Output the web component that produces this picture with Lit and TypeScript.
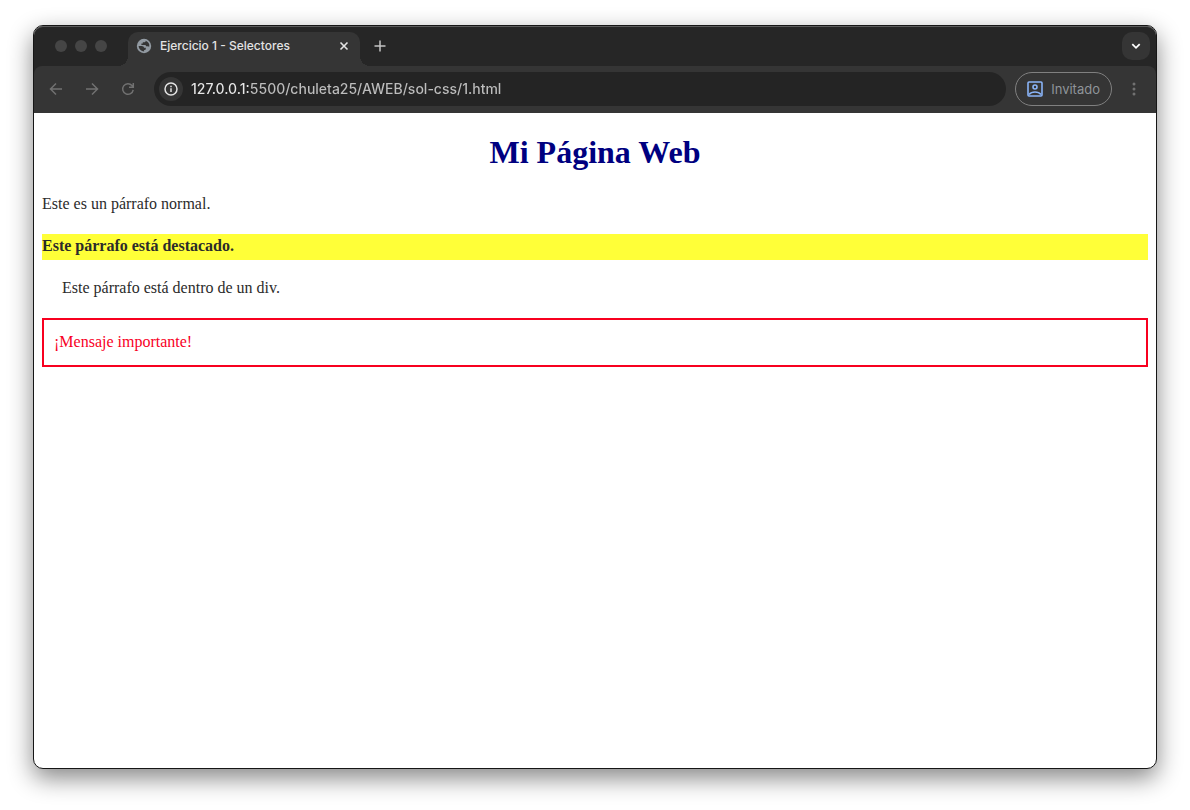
import { LitElement, html, css } from "lit";
import { customElement, property } from "lit/decorators.js";

@customElement("browser-tab")
class BrowserTab extends LitElement {
  @property() label = "";

  static styles = css`
    :host {
      display: block;
      width: 232px;
    }
    .tab {
      position: relative;
      display: flex;
      align-items: center;
      height: 34px;
      box-sizing: border-box;
      padding: 0 8px 6px;
      border-radius: 10px 10px 0 0;
      background: #353535;
      color: #e3e3e3;
    }
    .tab::before,
    .tab::after {
      content: "";
      position: absolute;
      bottom: 0;
      width: 10px;
      height: 10px;
    }
    .tab::before {
      right: 100%;
      background: radial-gradient(circle at 0 0, transparent 10px, #353535 10px);
    }
    .tab::after {
      left: 100%;
      background: radial-gradient(circle at 100% 0, transparent 10px, #353535 10px);
    }
    .title {
      flex: 1;
      margin-left: 8px;
      font-size: 12px;
      line-height: 16px;
      font-weight: 500;
      white-space: nowrap;
      overflow: hidden;
    }
    .close {
      display: grid;
      place-items: center;
      width: 16px;
      height: 16px;
      padding: 0;
      border: 0;
      background: none;
      color: inherit;
    }
    svg {
      display: block;
    }
  `;

  render() {
    return html`
      <div class="tab">
        <svg width="16" height="16" viewBox="0 0 16 16" aria-hidden="true">
          <circle cx="8" cy="8" r="7.200" fill="#929aa2" />
          <path
            d="M2.600 8H5.600C7.200 8 8 8.700 8 9.800H9.800V11C9.800 11.700 9.200 12 8.100 12V13.400A5.500 5.500 0 0 1 2.600 8Z"
            fill="#353535"
          />
          <path
            d="M9.600 2.700V3.200C9.600 4 9 4.300 8 4.300H6.800V5.500H5.400V7H8.700C9.600 7 10 7.500 10 8.200H11.500C12.300 8.200 12.600 8.700 13.300 8.500A5.500 5.500 0 0 0 9.600 2.700Z"
            fill="#353535"
          />
        </svg>
        <span class="title">${this.label}</span>
        <button class="close" aria-label="Cerrar pestaña">
          <svg width="16" height="16" viewBox="0 0 16 16" fill="none" stroke="currentColor" stroke-width="1.600">
            <path d="M4.500 4.500l7 7M11.500 4.500l-7 7" />
          </svg>
        </button>
      </div>
    `;
  }
}

@customElement("browser-toolbar")
class BrowserToolbar extends LitElement {
  @property() url = "";

  static styles = css`
    :host {
      display: block;
    }
    .toolbar {
      display: flex;
      align-items: center;
      height: 47px;
      box-sizing: border-box;
      padding: 0 8px 1px 4px;
      border-radius: 8px 8px 0 0;
      background: #353535;
    }
    button {
      display: flex;
      align-items: center;
      justify-content: center;
      padding: 0;
      border: 0;
      background: none;
      font: inherit;
    }
    .nav {
      width: 36px;
      height: 34px;
      color: #717171;
    }
    .address {
      flex: 1;
      display: flex;
      align-items: center;
      gap: 8px;
      height: 34px;
      min-width: 0;
      box-sizing: border-box;
      margin-left: 8px;
      padding: 0 16px 0 5px;
      border-radius: 17px;
      background: #242424;
    }
    .info {
      flex: none;
      width: 24px;
      height: 24px;
      border-radius: 12px;
      background: #353535;
      color: #e3e3e3;
    }
    .url {
      flex: 1;
      min-width: 0;
      height: 24px;
      box-sizing: border-box;
      padding: 0 0 2px;
      border: 0;
      outline: 0;
      font: inherit;
      font-size: 14px;
      font-weight: 500;
      background: linear-gradient(to right, #e8e8e8 60px, #bdbdbd 60px);
      background-clip: text;
      -webkit-background-clip: text;
      color: transparent;
    }
    .profile {
      gap: 8px;
      height: 34px;
      box-sizing: border-box;
      margin-left: 9px;
      padding: 0 11px;
      border: 1px solid #808080;
      border-radius: 17px;
      color: #8f9499;
      font-size: 13px;
    }
    .menu {
      width: 28px;
      height: 34px;
      margin-left: 8px;
      color: #717171;
    }
    svg {
      display: block;
    }
  `;

  render() {
    return html`
      <div class="toolbar">
        <button class="nav" aria-label="Atrás">
          <svg width="16" height="16" viewBox="0 0 16 16" fill="none" stroke="currentColor" stroke-width="1.500">
            <path d="M14 8H3M8 2.500 2.500 8 8 13.500" />
          </svg>
        </button>
        <button class="nav" aria-label="Adelante">
          <svg width="16" height="16" viewBox="0 0 16 16" fill="none" stroke="currentColor" stroke-width="1.500">
            <path d="M2 8h11M8 2.500 13.500 8 8 13.500" />
          </svg>
        </button>
        <button class="nav" aria-label="Recargar">
          <svg width="16" height="16" viewBox="0 0 16 16" fill="none" stroke="currentColor" stroke-width="1.500">
            <path d="M13.200 8.800A5.300 5.300 0 1 1 12 4.500L13.300 6M13.300 2v4.300H9" />
          </svg>
        </button>
        <div class="address">
          <button class="info" aria-label="Información del sitio">
            <svg width="16" height="16" viewBox="0 0 16 16" fill="none" stroke="currentColor" stroke-width="1.500">
              <circle cx="8" cy="8" r="6" />
              <path d="M8 7.200v3.800M8 4.800v1.500" />
            </svg>
          </button>
          <input class="url" type="text" aria-label="Dirección" spellcheck="false" .value=${this.url} />
        </div>
        <button class="profile">
          <svg width="16" height="16" viewBox="0 0 16 16" fill="none" stroke="#8ab4f8" stroke-width="1.600">
            <rect x="1" y="1" width="14" height="14" rx="1" />
            <circle cx="8" cy="6" r="2" />
            <path d="M2 13.600C3.500 11.800 5.500 11 8 11s4.500.8 6 2.600" />
          </svg>
          <span>Invitado</span>
        </button>
        <button class="menu" aria-label="Menú">
          <svg width="16" height="16" viewBox="0 0 16 16" fill="currentColor">
            <circle cx="8" cy="3" r="1.500" />
            <circle cx="8" cy="8" r="1.500" />
            <circle cx="8" cy="13" r="1.500" />
          </svg>
        </button>
      </div>
    `;
  }
}

@customElement("web-document")
class WebDocument extends LitElement {
  static styles = css`
    :host {
      display: block;
      padding: 0 8px;
      font-family: "Liberation Serif", "Times New Roman", serif;
      font-size: 16px;
      line-height: 24px;
      color: #2b2b2b;
    }
    h1 {
      margin: 21px 0;
      font-size: 32px;
      line-height: 37px;
      text-align: center;
      color: #000080;
    }
    p {
      margin: 16px 0;
      padding-bottom: 2px;
    }
    .featured {
      background: #ffff38;
      font-weight: bold;
    }
    .inner {
      margin-left: 20px;
    }
    .message {
      padding: 10px 10px 11px;
      border: 2px solid #f8001f;
      color: #f8001f;
    }
  `;

  render() {
    return html`
      <h1>Mi Página Web</h1>
      <p>Este es un párrafo normal.</p>
      <p class="featured">Este párrafo está destacado.</p>
      <div class="inner"><p>Este párrafo está dentro de un div.</p></div>
      <div class="message">¡Mensaje importante!</div>
    `;
  }
}

@customElement("app-root")
class AppRoot extends LitElement {
  static styles = css`
    :host {
      display: flex;
      min-height: 100vh;
      box-sizing: border-box;
      padding: 25px 33px 41px;
      background: #fff;
      overflow: hidden;
      font-family: Inter, "Liberation Sans", sans-serif;
    }
    .window {
      flex: 1;
      min-width: 0;
      border: 1px solid #161616;
      border-radius: 10px;
      background: #fff;
      box-shadow: 0 9px 24px rgba(0, 0, 0, 0.48);
    }
    .chrome {
      border-radius: 9px 9px 0 0;
      background: #262626;
      overflow: hidden;
      box-shadow: inset 0 1px #5c5c5c;
    }
    .strip {
      display: flex;
      align-items: flex-end;
      height: 40px;
      padding: 0 6px 0 21px;
    }
    .lights {
      display: flex;
      gap: 8px;
      align-self: center;
      margin-right: 21px;
    }
    .light {
      width: 12px;
      height: 12px;
      border-radius: 6px;
      background: #454545;
    }
    button {
      display: grid;
      place-items: center;
      width: 28px;
      height: 28px;
      margin-bottom: 6px;
      padding: 0;
      border: 0;
      border-radius: 10px;
      background: none;
    }
    .add {
      margin-left: 6px;
      color: #c4c4c4;
    }
    .search {
      margin-left: auto;
      background: #353535;
      color: #fff;
    }
    svg {
      display: block;
    }
  `;

  render() {
    return html`
      <div class="window">
        <div class="chrome">
          <div class="strip">
            <div class="lights">
              <span class="light"></span><span class="light"></span><span class="light"></span>
            </div>
            <browser-tab label="Ejercicio 1 - Selectores"></browser-tab>
            <button class="add" aria-label="Nueva pestaña">
              <svg width="16" height="16" viewBox="0 0 16 16" stroke="currentColor" stroke-width="1.500">
                <path d="M8 2.500v11M2.500 8h11" />
              </svg>
            </button>
            <button class="search" aria-label="Buscar pestañas">
              <svg width="16" height="16" viewBox="0 0 16 16" fill="none" stroke="currentColor" stroke-width="1.800">
                <path d="M4.300 6.200 8 9.800l3.700-3.600" />
              </svg>
            </button>
          </div>
          <browser-toolbar url="127.0.0.1:5500/chuleta25/AWEB/sol-css/1.html"></browser-toolbar>
        </div>
        <web-document></web-document>
      </div>
    `;
  }
}
